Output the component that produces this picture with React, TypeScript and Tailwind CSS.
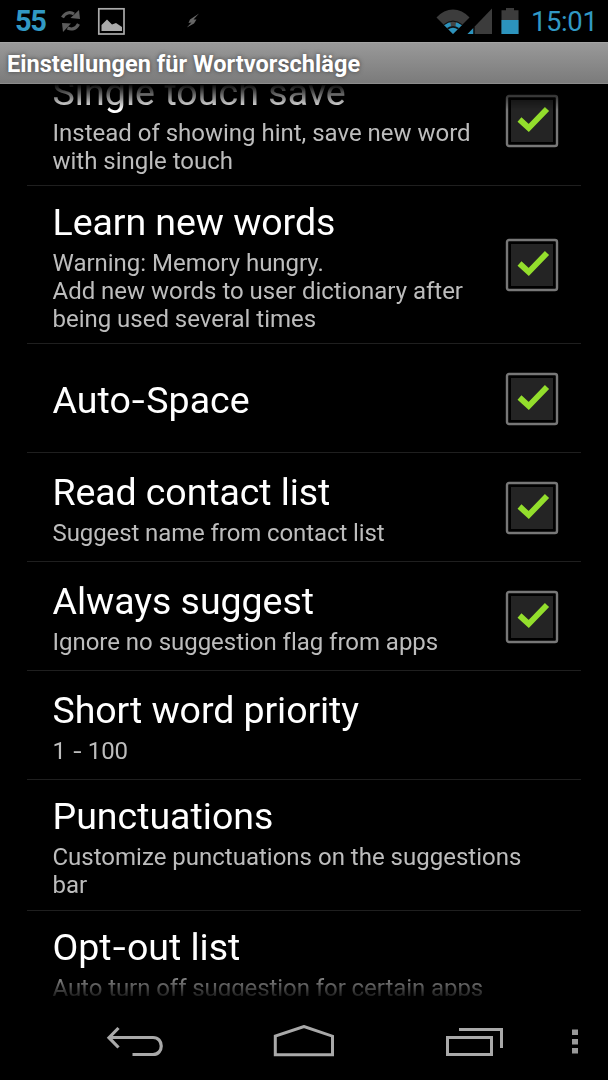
import React from "react";

type Item = {
  title: string;
  lines: string[];
  checked?: boolean;
  row: string;
  box?: string;
  titleTrack: string;
  lineTrack: string;
};

const items: Item[] = [
  {
    title: "Single touch save",
    lines: ["Instead of showing hint, save new word", "with single touch"],
    checked: true,
    row: "h-[132px] -mt-[31px] pt-[18px]",
    box: "items-start pt-[10px]",
    titleTrack: "tracking-[0.06px]",
    lineTrack: "tracking-[-0.01px]",
  },
  {
    title: "Learn new words",
    lines: [
      "Warning: Memory hungry.",
      "Add new words to user dictionary after",
      "being used several times",
    ],
    checked: true,
    row: "h-[157px] pt-[15px]",
    box: "items-center",
    titleTrack: "tracking-[-0.06px]",
    lineTrack: "tracking-[-0.02px]",
  },
  {
    title: "Auto-Space",
    lines: [],
    checked: true,
    row: "h-[108px] pt-[35px]",
    box: "items-center pt-[2px]",
    titleTrack: "tracking-[0.05px]",
    lineTrack: "tracking-normal",
  },
  {
    title: "Read contact list",
    lines: ["Suggest name from contact list"],
    checked: true,
    row: "h-[108px] pt-[18px]",
    box: "items-center pt-[2px]",
    titleTrack: "tracking-[-0.1px]",
    lineTrack: "tracking-[-0.1px]",
  },
  {
    title: "Always suggest",
    lines: ["Ignore no suggestion flag from apps"],
    checked: true,
    row: "h-[108px] pt-[18px]",
    box: "items-center pt-[2px]",
    titleTrack: "tracking-[-0.03px]",
    lineTrack: "tracking-[-0.03px]",
  },
  {
    title: "Short word priority",
    lines: ["1 - 100"],
    row: "h-[108px] pt-[18px]",
    titleTrack: "tracking-[-0.08px]",
    lineTrack: "tracking-normal",
  },
  {
    title: "Punctuations",
    lines: ["Customize punctuations on the suggestions", "bar"],
    row: "h-[130px] pt-[15px]",
    titleTrack: "tracking-[0px]",
    lineTrack: "tracking-[0px]",
  },
  {
    title: "Opt-out list",
    lines: ["Auto turn off suggestion for certain apps"],
    row: "h-[130px] pt-[15px]",
    titleTrack: "tracking-[0px]",
    lineTrack: "tracking-[-0.07px]",
  },
];

// Widens hyphens so that they sit with more air between their neighbours.
function Label({ text }: { text: string }) {
  return (
    <>
      {text.split("-").map((part, i) => (
        <React.Fragment key={i}>
          {i > 0 && <span className="mx-[0.065em] inline-block scale-x-[1.25]">-</span>}
          {part}
        </React.Fragment>
      ))}
    </>
  );
}

function Checkbox() {
  return (
    <svg width="54" height="54" viewBox="0 0 54 54" className="block shrink-0">
      <rect x="2" y="2" width="50" height="50" rx="2" fill="#000" stroke="#777" strokeWidth="2.4" />
      <rect x="6" y="6" width="42" height="42" fill="#242424" />
      <path d="M14.5 25.5 L23.7 34 L42 15" fill="none" stroke="#93de2c" strokeWidth="5.8" />
    </svg>
  );
}

function StatusBar() {
  return (
    <div className="flex h-[42px] shrink-0 items-center bg-black text-[#3199c4]">
      <span className="ml-[15px] w-[45px] text-[29px] leading-[42px] font-bold tracking-[-1.3px]">55</span>
      <svg width="22" height="26" viewBox="0 0 22 26" fill="none" className="block">
        <path d="M2.5 9.5 C5 4.5 10 3.5 14 6" stroke="#5c5c5c" strokeWidth="3.2" />
        <path d="M19 2 L20 11 L10.5 10 Z" fill="#5c5c5c" />
        <path d="M18.5 16 C16 21 11.5 22 7.5 20" stroke="#5c5c5c" strokeWidth="3.2" />
        <path d="M2 15 L11 15.5 L3 24 Z" fill="#5c5c5c" />
      </svg>
      <svg width="28" height="28" viewBox="0 0 28 28" className="ml-[15px] block shrink-0">
        <rect x="1.8" y="1.8" width="25.2" height="25.2" fill="none" stroke="#aaa" strokeWidth="1.7" />
        <path d="M4.5 24 V18 L10 12.5 L15 17.5 L19 16 L25 20 V24 Z" fill="#aaa" />
      </svg>
      <svg width="14" height="16" viewBox="0 0 14 16" className="ml-[61px] block shrink-0">
        <path d="M13 .5 L4 6.5 L2.5 10 L5.5 9.5 L.8 14.5 L8 10.5 L10.5 6.5 L7.5 6.5 Z" fill="#666" />
      </svg>
      <svg width="86" height="30" viewBox="0 0 86 30" className="ml-[236px] block shrink-0">
        <path d="M0.5 11.5 C10 .8 24 .8 33.5 11.5 L17 28 Z" fill="#3c3c3c" />
        <path d="M8 19 Q17 12.5 26 19 L17 28 Z" fill="#2c93bd" />
        <path d="M14.3 16 H20 L19.5 20.5 H15 Z" fill="#454545" />
        <path d="M11.5 22.8 Q17 18.8 22.5 22.8" fill="none" stroke="#111" strokeWidth="1.8" />
        <path d="M8 18.6 Q17 11.6 26 18.6" fill="none" stroke="#111" strokeWidth="1.2" />
        <path d="M56 2.5 V28 H31.5 Z" fill="#3c3c3c" />
        <path d="M37.5 22 V28 H31.5 Z" fill="#2c93bd" />
        <path d="M38 21 V28" stroke="#000" strokeWidth="1.2" />
        <path d="M70 2 H78 V4.3 H82.5 V28 H65.5 V4.3 H70 Z" fill="#3c3c3c" />
        <rect x="65.5" y="14" width="17" height="14" fill="#2c93bd" />
      </svg>
      <span className="ml-[9px] pt-[2px] text-[27.5px] leading-[40px] tracking-[-0.4px] whitespace-nowrap">
        15:01
      </span>
    </div>
  );
}

function Row({ item }: { item: Item }) {
  return (
    <div className="flex shrink-0 border-b border-[#1f1f1f] pr-[22px] pl-[25.5px]">
      <div className={`grow whitespace-nowrap ${item.row}`}>
        <div className={`text-[37.5px] leading-[43px] text-white ${item.titleTrack}`}>
          <Label text={item.title} />
        </div>
        <div className={`mt-[5px] text-[24px] leading-[28px] text-[#bdbdbd] ${item.lineTrack}`}>
          {item.lines.map((line) => (
            <div key={line}>
              <Label text={line} />
            </div>
          ))}
        </div>
      </div>
      {item.checked && (
        <div className={`flex ${item.box}`}>
          <Checkbox />
        </div>
      )}
    </div>
  );
}

function NavBar() {
  return (
    <div className="flex h-[84px] shrink-0 items-center bg-black pt-[7px]">
      <svg width="58" height="34" viewBox="0 0 58 34" fill="none" stroke="#a9a9a9" className="ml-[106px] block">
        <path d="M3 12.5 H47 C58 12.5 58 29.5 47 29.5 H26.5" strokeWidth="3.2" />
        <path d="M12.5 3 L3 12.7 L12.5 22.5" strokeWidth="3.2" />
      </svg>
      <svg width="64" height="34" viewBox="0 0 64 34" fill="none" stroke="#a9a9a9" className="ml-[108px] block">
        <path d="M3.3 29.7 V11.2 L32 1.5 L60.5 11.2 V29.7 Z" strokeWidth="3" />
      </svg>
      <svg width="60" height="34" viewBox="0 0 60 34" fill="none" stroke="#a9a9a9" strokeWidth="3" className="ml-[109px] block">
        <rect x="2.5" y="12.5" width="44" height="17" />
        <path d="M14 4.5 H56.5 V23" />
      </svg>
      <svg width="8" height="28" viewBox="0 0 8 28" fill="#999" className="ml-[66px] block">
        <rect x="1" y="1.5" width="6" height="5.5" />
        <rect x="1" y="11" width="6" height="5.5" />
        <rect x="1" y="20" width="6" height="5.5" />
      </svg>
    </div>
  );
}

export default function App() {
  return (
    <div className="flex h-[1080px] w-[608px] flex-col overflow-hidden bg-black font-['Roboto','Liberation_Sans',sans-serif]">
      <StatusBar />
      <header className="flex h-[42px] shrink-0 items-center border-t border-b border-t-[#a5a5a5] border-b-[#8c8c8c] bg-linear-to-b from-[#999] to-[#7b7b7b] pt-[2px] pl-[7px]">
        <h1 className="text-[23.5px] leading-[40px] font-bold tracking-[0.04px] whitespace-nowrap text-white [text-shadow:0_0_4px_#444]">
          Einstellungen für Wortvorschläge
        </h1>
      </header>
      <main className="flex h-[912px] shrink-0 flex-col overflow-hidden px-[27px] [mask-image:linear-gradient(to_bottom,transparent_0,black_26px,black_885px,transparent_917px)]">
        {items.map((item) => (
          <Row key={item.title} item={item} />
        ))}
      </main>
      <NavBar />
    </div>
  );
}
